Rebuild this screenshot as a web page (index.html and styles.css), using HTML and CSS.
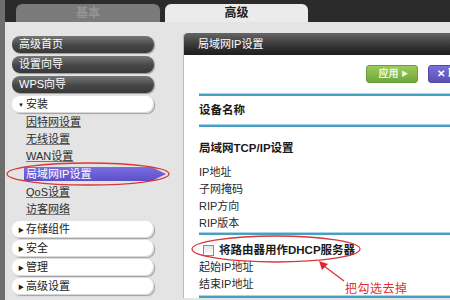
FILE: index.html
```html
<!DOCTYPE html>
<html lang="zh-CN">

<head>
    <meta charset="UTF-8">
    <meta name="viewport" content="width=device-width, initial-scale=1.0">
    <title>局域网IP设置</title>
    <link rel="stylesheet" href="styles.css">
</head>

<body>
    <div class="page">
        <div class="topbar">
            <div class="tab tab-off">基本</div>
            <div class="tab tab-on">高级</div>
        </div>

        <div class="main">
            <div class="sidebar">
                <div class="pill pill-dark">高级首页</div>
                <div class="pill pill-dark">设置向导</div>
                <div class="pill pill-dark">WPS向导</div>
                <div class="pill pill-light"><span class="caret">▼</span>安装</div>
                <ul class="submenu">
                    <li><a href="#">因特网设置</a></li>
                    <li><a href="#">无线设置</a></li>
                    <li><a href="#">WAN设置</a></li>
                    <li class="active"><a href="#">局域网IP设置</a></li>
                    <li><a href="#">QoS设置</a></li>
                    <li><a href="#">访客网络</a></li>
                </ul>
                <div class="lower">
                    <div class="pill pill-light"><span class="caret">▶</span>存储组件</div>
                    <div class="pill pill-light"><span class="caret">▶</span>安全</div>
                    <div class="pill pill-light"><span class="caret">▶</span>管理</div>
                    <div class="pill pill-light"><span class="caret">▶</span>高级设置</div>
                </div>
            </div>

            <div class="panel">
                <div class="panel-head">局域网IP设置</div>
                <div class="panel-body">
                    <div class="actions">
                        <span class="btn btn-apply">应用 <span class="arrow">▶</span></span>
                        <span class="btn btn-cancel">✕ 取消</span>
                    </div>
                    <div class="section section-name">
                        <div class="row bold">设备名称</div>
                    </div>
                    <div class="section section-tcp">
                        <div class="row bold title">局域网TCP/IP设置</div>
                        <div class="row">IP地址</div>
                        <div class="row">子网掩码</div>
                        <div class="row">RIP方向</div>
                        <div class="row">RIP版本</div>
                    </div>
                    <div class="section section-dhcp">
                        <label class="row bold check-row"><span class="checkbox"></span>将路由器用作DHCP服务器</label>
                        <div class="row">起始IP地址</div>
                        <div class="row">结束IP地址</div>
                    </div>
                    <div class="section"></div>
                </div>
            </div>
        </div>

        <!-- red hand-drawn marks over the screenshot -->
        <svg class="marks" width="450" height="300" viewBox="0 0 450 300">
            <ellipse cx="88" cy="174" rx="81" ry="11" />
            <ellipse cx="276" cy="249" rx="84" ry="13" />
            <line x1="344" y1="281" x2="324" y2="266" />
            <polygon points="319,261 328,264 322,270" />
        </svg>
        <div class="note">把勾选去掉</div>
    </div>
</body>

</html>
```

FILE: styles.css
```css
html,
body {
    margin: 0;
    padding: 0;
}

body {
    width: 450px;
    height: 300px;
    overflow: hidden;
    background: #e4e4e4;
    font-family: "Liberation Sans", "Noto Sans CJK SC", sans-serif;
    font-size: 11px;
    color: #222;
}

.page {
    position: relative;
    height: 300px;
    border-left: 5px solid #6e6e6e;
    box-sizing: border-box;
}

/* top tabs */

.topbar {
    display: flex;
    align-items: flex-end;
    gap: 5px;
    height: 22px;
    padding-left: 11px;
    background: #2b2b2b;
}

.topbar .tab {
    width: 144px;
    height: 18px;
    line-height: 18px;
    text-align: center;
    border-radius: 6px 6px 0 0;
    font-size: 12px;
    font-weight: bold;
}

.topbar .tab-off {
    background: #7a7a7a;
    color: #959595;
}

.topbar .tab-on {
    width: 143px;
    background: #ebebeb;
    color: #1c1c1c;
}

/* layout */

.main {
    display: flex;
    align-items: flex-start;
    gap: 29px;
    padding-left: 7px;
}

.sidebar {
    width: 142px;
    padding-top: 14px;
    display: flex;
    flex-direction: column;
    gap: 3px;
}

.pill {
    height: 17px;
    line-height: 17px;
    padding-left: 7px;
    border-radius: 8px;
    box-sizing: border-box;
}

.pill-dark {
    background: linear-gradient(#767676, #474747 55%, #383838);
    color: #fff;
    box-shadow: 1px 1px 1px #9a9a9a;
}

.pill-light {
    background: #fff;
    color: #222;
    padding-left: 6px;
    box-shadow: 1px 1px 1px #a0a0a0, inset -1px -1px 0 #d8d8d8;
}

.pill-light .caret {
    display: inline-block;
    font-size: 6px;
    width: 8px;
    vertical-align: 1px;
}

.submenu {
    list-style: none;
    margin: -2px 0 0;
    padding: 0;
}

.submenu li {
    height: 17px;
    line-height: 17px;
    padding-left: 14px;
}

.submenu li a {
    color: #2c2c2c;
    text-decoration: underline;
    text-decoration-color: #777;
}

.submenu li.active {
    padding-left: 12px;
}

.submenu li.active a {
    display: block;
    width: 140px;
    height: 14px;
    line-height: 14px;
    margin-top: 2px;
    padding-left: 2px;
    background: linear-gradient(#7a6ee0, #5c4fc9);
    color: #fff;
    text-decoration: none;
    clip-path: polygon(0 0, 90% 0, 100% 50%, 90% 100%, 0 100%);
}

.lower {
    display: flex;
    flex-direction: column;
    gap: 2px;
    margin-top: 0;
}

/* right panel */

.panel {
    flex: none;
    width: 305px;
    margin-top: 11px;
    background: #fff;
    border-left: 1px solid #b9b9b9;
    border-radius: 4px 4px 0 0;
}

.panel-head {
    height: 22px;
    line-height: 22px;
    padding-left: 14px;
    background: linear-gradient(#666, #333 60%, #1e1e1e);
    color: #fff;
    border-radius: 4px 0 0 0;
}

.panel-body {
    padding: 10px 0 0 15px;
}

.actions {
    display: flex;
    justify-content: flex-end;
    gap: 10px;
    padding-right: 12px;
    margin-bottom: 11px;
}

.btn {
    height: 16px;
    line-height: 16px;
    padding: 0 8px;
    border-radius: 3px;
    color: #fff;
    font-size: 10px;
    font-weight: bold;
    white-space: nowrap;
}

.btn-apply {
    padding: 0 9px 0 11px;
    background: linear-gradient(#9bcb5c, #6fa83a);
    border: 1px solid #6a9e3c;
    color: #eef8e2;
}

.btn-apply .arrow {
    font-size: 7px;
    vertical-align: 1px;
}

.btn-cancel {
    background: linear-gradient(#7b70d6, #5a4fb8);
    border: 1px solid #5247a8;
}

.section {
    border-top: 2px solid #45a0c4;
    box-shadow: 0 -1px 0 #a9d4e6;
}

.row {
    height: 17px;
    line-height: 17px;
    color: #2a2a2a;
}

.bold {
    font-weight: bold;
    font-size: 11.5px;
    color: #1a1a1a;
}

.section-name {
    padding: 6px 0 6px;
}

.section-tcp {
    padding: 13px 0 1px;
}

.section-tcp .title {
    margin-bottom: 7px;
}

.section-dhcp {
    padding: 7px 0 3px;
}

.check-row {
    display: flex;
    align-items: center;
    gap: 5px;
    padding-left: 4px;
}

.checkbox {
    width: 9px;
    height: 9px;
    border: 1px solid #8c8c8c;
    background: linear-gradient(#e6e6e6, #fff);
}

/* annotations */

.marks {
    position: absolute;
    top: 0;
    left: -5px;
    pointer-events: none;
}

.marks ellipse,
.marks line {
    fill: none;
    stroke: #d8383a;
    stroke-width: 1.3;
}

.marks polygon {
    fill: #e0282c;
}

.note {
    position: absolute;
    left: 340px;
    top: 279px;
    color: #e0302f;
    font-size: 12px;
    letter-spacing: 0.5px;
}
```
